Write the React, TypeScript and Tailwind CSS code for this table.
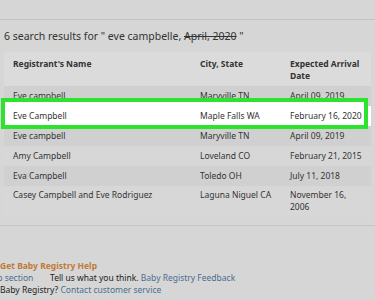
const rows = [
  { name: "Eve campbell", city: "Maryville TN", date: "April 09, 2019" },
  { name: "Eve Campbell", city: "Maple Falls WA", date: "February 16, 2020", hl: true },
  { name: "Eve campbell", city: "Maryville TN", date: "April 09, 2019" },
  { name: "Amy Campbell", city: "Loveland CO", date: "February 21, 2015" },
  { name: "Eva Campbell", city: "Toledo OH", date: "July 11, 2018" },
  { name: "Casey Campbell and Eve Rodriguez", city: "Laguna Niguel CA", date: "November 16, 2006" },
]

export default function App() {
  return (
    <div className="w-[375px] h-[300px] overflow-hidden bg-[#d6d6d6] text-[#222] font-['Noto_Sans',sans-serif]">
      <div className="h-[20px] border-b border-[#c3c3c3]"></div>
      <div className="pl-[4px] pt-[7px] text-[10.5px] leading-[18px] text-[#333]">
        6 search results for " eve campbelle, <span className="line-through">April, 2020</span> "
      </div>
      <div className="mt-[7px] mx-[4px] bg-[#d8d8d8] rounded-[2px]">
        <div className="flex bg-[#dbdbdb] h-[34px] pt-[6px] text-[8.5px] leading-[12px] font-bold text-[#333]">
          <div className="w-[196px] pl-[9px]">Registrant's Name</div>
          <div className="w-[90px]">City, State</div>
          <div className="w-[80px]">Expected Arrival<br />Date</div>
        </div>
        {rows.map((r, i) => (
          <div
            key={i}
            className={
              "relative flex text-[8.5px] leading-[12px] text-[#333] " +
              (r.hl ? "bg-white h-[20px] items-center z-10" : i % 2 === 0 ? "bg-[#d0d0d0] " : "bg-[#d7d7d7] ") +
              (i === 5 ? "py-[3px] h-[32px]" : r.hl ? "" : "h-[20px] items-center")
            }
          >
            {r.hl && (
              <div className="absolute left-[-3px] right-[3px] top-[-8px] bottom-[-3px] border-[4px] border-[#2ee32e] bg-white"></div>
            )}
            <div className="relative w-[196px] pl-[9px]">{r.name}</div>
            <div className="relative w-[90px]">{r.city}</div>
            <div className={"relative " + (i === 5 ? "w-[60px]" : "w-[80px]")}>{r.date}</div>
          </div>
        ))}
      </div>
      <div className="mt-[7px] border-b border-[#c6c6c6]"></div>
      <div className="pt-[34px] text-[8.5px] leading-[12px] whitespace-nowrap">
        <div className="font-bold text-[#c07a36]">Get Baby Registry Help</div>
        <div className="flex ml-[-16px]">
          <span className="text-[#4a6d8e] w-[66px]">Help section</span>
          <span className="text-[#222]">Tell us what you think.&nbsp;</span>
          <span className="text-[#4a6d8e]">Baby Registry Feedback</span>
        </div>
        <div>
          <span>Baby Registry? </span>
          <span className="text-[#4a6d8e]">Contact customer service</span>
        </div>
      </div>
    </div>
  )
}
